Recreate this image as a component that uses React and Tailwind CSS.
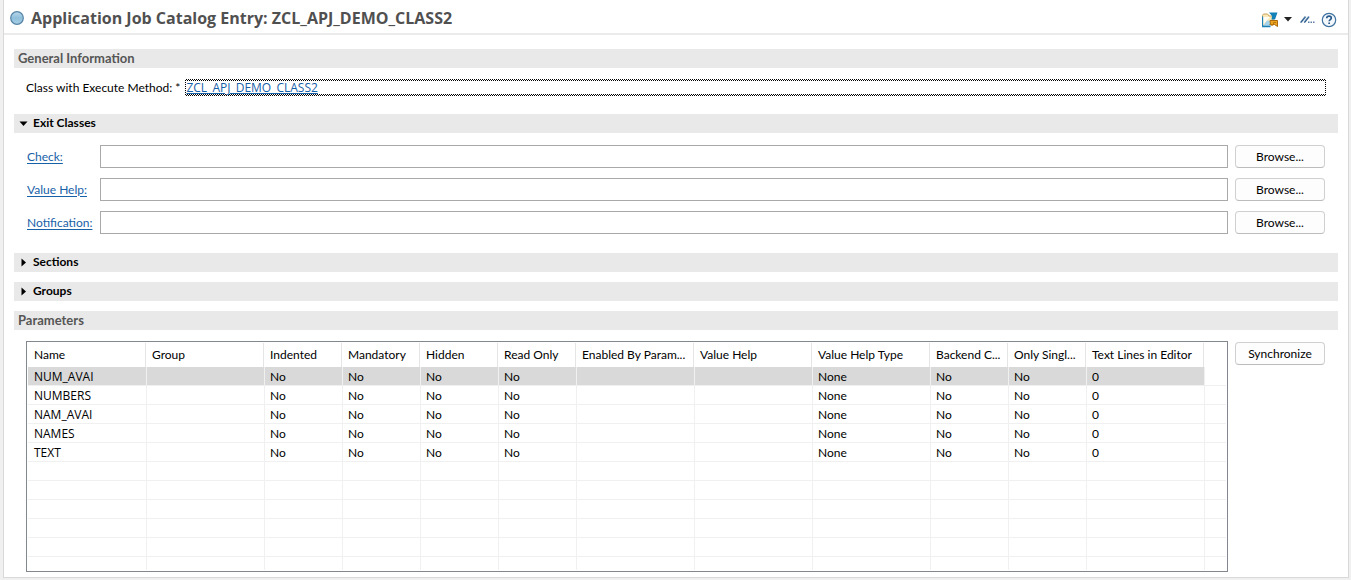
import { useState } from "react";

const columns = [
  { label: "Name", width: "w-[119px]", cell: "pl-1.5 font-['Open_Sans','Noto_Sans',sans-serif]", pad: "pl-1.5" },
  { label: "Group", width: "w-[118px]", cell: "pl-[5px]", pad: "pl-[5px]" },
  { label: "Indented", width: "w-[78px]", cell: "pl-[5px]", pad: "pl-[5px]" },
  { label: "Mandatory", width: "w-[78px]", cell: "pl-[5px]", pad: "pl-[5px]" },
  { label: "Hidden", width: "w-[78px]", cell: "pl-[5px]", pad: "pl-[5px]" },
  { label: "Read Only", width: "w-[78px]", cell: "pl-[5px]", pad: "pl-[5px]" },
  { label: "Enabled By Param...", width: "w-[118px]", cell: "pl-[5px]", pad: "pl-[5px]" },
  { label: "Value Help", width: "w-[118px]", cell: "pl-[5px]", pad: "pl-[5px]" },
  { label: "Value Help Type", width: "w-[118px]", cell: "pl-[5px]", pad: "pl-[5px]" },
  { label: "Backend C...", width: "w-[78px]", cell: "pl-[5px]", pad: "pl-[5px]" },
  { label: "Only Singl...", width: "w-[78px]", cell: "pl-[5px]", pad: "pl-[5px]" },
  { label: "Text Lines in Editor", width: "w-[118px]", cell: "pl-[5px]", pad: "pl-[5px]" },
];

const names = ["NUM_AVAI", "NUMBERS", "NAM_AVAI", "NAMES", "TEXT"];
const rows = names.map((name) => [
  name, "", "No", "No", "No", "No", "", "", "None", "No", "No", "0",
]);
const emptyRows = [1, 2, 3, 4, 5];

function StatusIcon() {
  return (
    <svg width="14" height="14" viewBox="0 0 14 14" aria-hidden="true">
      <defs>
        <linearGradient id="ball" x1="0" y1="0" x2="0" y2="1">
          <stop offset="0" stopColor="#b9d8ea" />
          <stop offset="0.5" stopColor="#8fbfdc" />
          <stop offset="1" stopColor="#a9cfe4" />
        </linearGradient>
      </defs>
      <circle cx="7" cy="7" r="6.300" fill="url(#ball)" stroke="#5584a6" strokeWidth="1.200" />
    </svg>
  );
}

function FolderIcon() {
  return (
    <svg width="16" height="16" viewBox="0 0 16 16" aria-hidden="true">
      <path d="M.5 13.500V3.500L1.500 2h4l1.500 2h4v9.500z" fill="#fbe9b8" stroke="#c9a45a" />
      <path d="M1 5h7L1.500 12z" fill="#fffdf3" />
      <path d="M1 14l4-5.500 4 .5v5z" fill="#a6d3ea" />
      <path d="M.5 4.500V14.500h8" fill="none" stroke="#1f7fb5" strokeWidth="1.300" />
      <path d="M7 .5h8.500L13 7.500H9.500l.5-3.500z" fill="#1380b8" />
      <path d="M8 8.500h7.500v6l-3-2H8.500z" fill="#eda51d" stroke="#a8690f" />
      <path d="M7.500 12.500h4v-2H14" fill="none" stroke="#b87410" />
    </svg>
  );
}

function ToolIcon() {
  return (
    <svg width="15" height="9" viewBox="0 0 15 9" aria-hidden="true">
      <path d="M.8 7.500L5.600 1.500M4.300 7.500L9 1.500" stroke="#6d93b8" strokeWidth="2" />
      <path d="M.8 7.500L5 2.300M4.500 7.500L8.500 2.500" stroke="#2d5a8a" strokeWidth="1" />
      <path d="M8 6.500h1.500v1.500H8zM10.500 6.500H12v1.500h-1.500zM13 6.500h1.500v1.500H13z" fill="#5a7fa5" />
    </svg>
  );
}

function HelpIcon() {
  return (
    <svg width="16" height="16" viewBox="0 0 16 16" aria-hidden="true">
      <circle cx="8" cy="8" r="6.700" fill="#f3f8fc" stroke="#3f729f" strokeWidth="1.200" />
      <path d="M5.700 6.300C5.700 4.800 6.700 4.200 8 4.200s2.300.7 2.300 1.900c0 1.500-2.100 1.600-2.100 3.200" fill="none" stroke="#285b8c" strokeWidth="1.700" />
      <path d="M7.300 10.500H9V12H7.300z" fill="#285b8c" />
    </svg>
  );
}

function Twistie({ open }) {
  return (
    <svg width="9" height="9" viewBox="0 0 9 9" aria-hidden="true">
      {open ? <path d="M.5 2.500h8l-4 4.500z" /> : <path d="M2.500.5v8l4.500-4z" />}
    </svg>
  );
}

function Bar({ title }) {
  return (
    <h2 className="flex h-[19px] items-center bg-[#e9e9e9] px-1 pb-px text-[13px] font-bold text-[#565656]">{title}</h2>
  );
}

function FoldBar({ title, open, onToggle }) {
  return (
    <h2 className="flex bg-[#e9e9e9]">
      <button
        type="button"
        aria-expanded={open}
        onClick={onToggle}
        className="flex h-[19px] flex-1 items-center gap-[5px] px-[5px] pb-px font-bold text-black"
      >
        <Twistie open={open} />
        {title}
      </button>
    </h2>
  );
}

function PushButton({ children }) {
  return (
    <button
      type="button"
      className="h-[23px] w-[90px] shrink-0 rounded border border-[#d0d0d0] border-b-[#bcbcbc] bg-[#fdfdfd] text-center"
    >
      {children}
    </button>
  );
}

function ExitClassRow({ id, label }) {
  return (
    <div className="grid grid-cols-[66px_1fr_90px] items-center gap-x-[7px]">
      <label htmlFor={id} className="whitespace-nowrap">
        <a href="#" className="text-[#1761a8] underline underline-offset-2">{label}</a>
      </label>
      <input id={id} type="text" className="h-[23px] min-w-0 border border-[#a9a9a9] bg-white px-1 outline-none" />
      <PushButton>Browse...</PushButton>
    </div>
  );
}

function ParameterTable() {
  return (
    <div className="min-w-0 flex-1 border border-[#828790] p-px">
      <table className="w-full table-fixed border-separate border-spacing-0">
        <thead>
          <tr>
            {columns.map((c) => (
              <th key={c.label} className={`${c.width} p-0 pr-px text-left font-normal`}>
                <div className={`${c.pad} border-r border-[#e5e5e5] leading-6 whitespace-nowrap`}>{c.label}</div>
              </th>
            ))}
            <td />
          </tr>
        </thead>
        <tbody>
          {rows.map((row, r) => (
            <tr key={row[0]} className="h-[19px]">
              {row.map((cell, i) => (
                <td
                  key={columns[i].label}
                  className={`${columns[i].cell} border-r border-b border-[#f0f0f0] pt-0.5 pr-0 pb-0 leading-4 ${r === 0 ? "bg-[#d9d9d9]" : ""}`}
                >
                  {cell}
                </td>
              ))}
              <td className="border-b border-[#f0f0f0] p-0" />
            </tr>
          ))}
          {emptyRows.map((n) => (
            <tr key={n} className="h-[19px]">
              {columns.map((c) => (
                <td key={c.label} className="border-r border-b border-[#f0f0f0] p-0" />
              ))}
              <td className="border-b border-[#f0f0f0] p-0" />
            </tr>
          ))}
          <tr className="h-[13px]">
            {columns.map((c) => (
              <td key={c.label} className="border-r border-[#f0f0f0] p-0" />
            ))}
            <td className="p-0" />
          </tr>
        </tbody>
      </table>
    </div>
  );
}

export default function App() {
  const [exitOpen, setExitOpen] = useState(true);
  const [sectionsOpen, setSectionsOpen] = useState(false);
  const [groupsOpen, setGroupsOpen] = useState(false);

  return (
    <div className="flex min-h-screen flex-col bg-[#f0f0f0] pr-0.5 pb-0.5 pl-[3px] font-['Lato','Open_Sans',sans-serif] text-[12px] leading-4 text-black">
      <main className="flex-1 border-x border-b border-[#d9d9d9] bg-white">
        <header className="flex h-[35px] items-center border-b-2 border-[#ebebeb] pt-0.5 pr-[11px] pl-1.5">
          <StatusIcon />
          <h1 className="ml-[7px] flex-1 font-['Open_Sans','Noto_Sans',sans-serif] text-[16px] leading-6 font-bold text-[#505050]">
            Application Job Catalog Entry: ZCL_APJ_DEMO_CLASS2
          </h1>
          <div className="flex items-center pt-1">
            <button type="button" aria-label="Open" className="mr-1.5"><FolderIcon /></button>
            <button type="button" aria-label="Open menu" className="mr-2">
              <svg width="8" height="5" viewBox="0 0 8 5" aria-hidden="true"><path d="M0 0h8L4 4.500z" fill="#222" /></svg>
            </button>
            <button type="button" aria-label="Templates" className="mr-1.5"><ToolIcon /></button>
            <button type="button" aria-label="Help"><HelpIcon /></button>
          </div>
        </header>

        <div className="px-[10px] pt-3.5 pb-[5px]">
          <Bar title="General Information" />
          <div className="flex items-center gap-[5px] px-3 pt-[11px] pb-[18px]">
            <span className="whitespace-nowrap">Class with Execute Method: *</span>
            <div className="flex-1 bg-[repeating-conic-gradient(#000_0_25%,#fff_0_50%)] bg-size-[2px_2px] px-px py-0.5">
              <div className="bg-white font-['Open_Sans','Noto_Sans',sans-serif] leading-[13px]">
                <a href="#" className="text-[#1761a8] underline">ZCL_APJ_DEMO_CLASS2</a>
              </div>
            </div>
          </div>

          <FoldBar title="Exit Classes" open={exitOpen} onToggle={() => setExitOpen(!exitOpen)} />
          {exitOpen && (
            <div className="flex flex-col gap-[10px] px-[13px] pt-3 pb-[9px]">
              <ExitClassRow id="check" label="Check:" />
              <ExitClassRow id="value-help" label="Value Help:" />
              <ExitClassRow id="notification" label="Notification:" />
            </div>
          )}

          <div className="flex flex-col gap-[10px] pt-[10px]">
            <FoldBar title="Sections" open={sectionsOpen} onToggle={() => setSectionsOpen(!sectionsOpen)} />
            <FoldBar title="Groups" open={groupsOpen} onToggle={() => setGroupsOpen(!groupsOpen)} />
            <Bar title="Parameters" />
          </div>

          <div className="flex items-start gap-[7px] pt-[11px] pr-[13px] pl-3">
            <ParameterTable />
            <div className="flex pt-px"><PushButton>Synchronize</PushButton></div>
          </div>
        </div>
      </main>
    </div>
  );
}
